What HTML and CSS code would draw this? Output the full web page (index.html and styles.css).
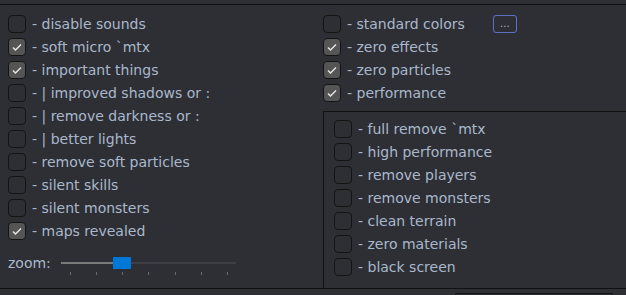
FILE: index.html
```html
<!DOCTYPE html>
<html lang="en">

<head>
    <meta charset="UTF-8">
    <meta name="viewport" content="width=device-width, initial-scale=1.0">
    <title>Settings</title>
    <link rel="stylesheet" href="styles.css">
</head>

<body>
    <div class="topbar"></div>

    <div class="settings">
        <div class="column left">
            <label class="option"><span class="box"></span>- disable sounds</label>
            <label class="option"><span class="box checked"></span>- soft micro `mtx</label>
            <label class="option"><span class="box checked"></span>- important things</label>
            <label class="option"><span class="box"></span>- | improved shadows or :</label>
            <label class="option"><span class="box"></span>- | remove darkness or :</label>
            <label class="option"><span class="box"></span>- | better lights</label>
            <label class="option"><span class="box"></span>- remove soft particles</label>
            <label class="option"><span class="box"></span>- silent skills</label>
            <label class="option"><span class="box"></span>- silent monsters</label>
            <label class="option"><span class="box checked"></span>- maps revealed</label>

            <div class="zoom">
                <span class="zoom-label">zoom:</span>
                <div class="slider">
                    <div class="track">
                        <div class="track-fill"></div>
                    </div>
                    <div class="thumb"></div>
                    <div class="ticks">
                        <span></span><span></span><span></span><span></span><span></span><span></span><span></span>
                    </div>
                </div>
            </div>
        </div>

        <div class="column right">
            <label class="option"><span class="box"></span>- standard colors <button class="more">...</button></label>
            <label class="option"><span class="box checked"></span>- zero effects</label>
            <label class="option"><span class="box checked"></span>- zero particles</label>
            <label class="option"><span class="box checked"></span>- performance</label>

            <div class="panel">
                <label class="option"><span class="box"></span>- full remove `mtx</label>
                <label class="option"><span class="box"></span>- high performance</label>
                <label class="option"><span class="box"></span>- remove players</label>
                <label class="option"><span class="box"></span>- remove monsters</label>
                <label class="option"><span class="box"></span>- clean terrain</label>
                <label class="option"><span class="box"></span>- zero materials</label>
                <label class="option"><span class="box"></span>- black screen</label>
            </div>
        </div>
    </div>

    <div class="footer">
        <div class="footer-box"></div>
    </div>
</body>

</html>
```

FILE: styles.css
```css
*,
*::before,
*::after {
    box-sizing: border-box;
}

body {
    margin: 0;
    padding: 0;
    background: #2e2f34;
    color: #a9b8cc;
    font-family: "DejaVu Sans", Verdana, sans-serif;
    font-size: 14px;
    overflow: hidden;
}

.topbar {
    height: 5px;
    border-bottom: 1px solid #111;
}

.settings {
    display: flex;
    height: 284px;
    border-bottom: 1px solid #111;
}

.column {
    display: flex;
    flex-direction: column;
    padding-top: 7px;
}

.left {
    width: 323px;
    padding-left: 8px;
}

.right {
    flex: 1;
}

.option {
    display: flex;
    align-items: center;
    height: 23px;
    white-space: nowrap;
    cursor: pointer;
}

.box {
    width: 18px;
    height: 18px;
    margin-right: 6px;
    border: 1px solid #141414;
    border-radius: 4px;
    flex-shrink: 0;
}

.box.checked {
    background: #555 url("data:image/svg+xml,%3Csvg xmlns='http://www.w3.org/2000/svg' width='16' height='16' viewBox='0 0 16 16'%3E%3Cpath d='M4 8.5l2.5 2.5 5.5-5.5' fill='none' stroke='%23e8e8e8' stroke-width='1.4'/%3E%3C/svg%3E") center no-repeat;
}

.more {
    margin-left: 28px;
    width: 24px;
    height: 18px;
    padding: 0;
    background: transparent;
    border: 1px solid #5b6fc4;
    border-radius: 3px;
    color: #a9b8cc;
    font-family: "DejaVu Sans", sans-serif;
    font-size: 10px;
    line-height: 14px;
}

.panel {
    flex: 1;
    margin-top: 7px;
    padding: 5px 0 0 10px;
    border-top: 1px solid #111;
    border-left: 1px solid #111;
}

.zoom {
    display: flex;
    align-items: flex-start;
    margin-top: 11px;
}

.zoom-label {
    width: 53px;
    line-height: 20px;
}

.slider {
    position: relative;
    width: 175px;
    height: 26px;
}

.track {
    margin-top: 9px;
    height: 2px;
    background: #3e3f45;
}

.track-fill {
    width: 61px;
    height: 2px;
    background: #7a7a7a;
}

.thumb {
    position: absolute;
    left: 52px;
    top: 4px;
    width: 18px;
    height: 12px;
    background: #0078d7;
}

.ticks {
    display: flex;
    justify-content: space-between;
    padding: 0 8px 0 9px;
    margin-top: 8px;
}

.ticks span {
    width: 1px;
    height: 3px;
    background: #6a6a6a;
}

.footer {
    display: flex;
    justify-content: flex-end;
    padding: 4px 13px 0 0;
}

.footer-box {
    width: 158px;
    height: 2px;
    border: 1px solid #111;
    border-bottom: none;
    border-radius: 4px 4px 0 0;
}
```
